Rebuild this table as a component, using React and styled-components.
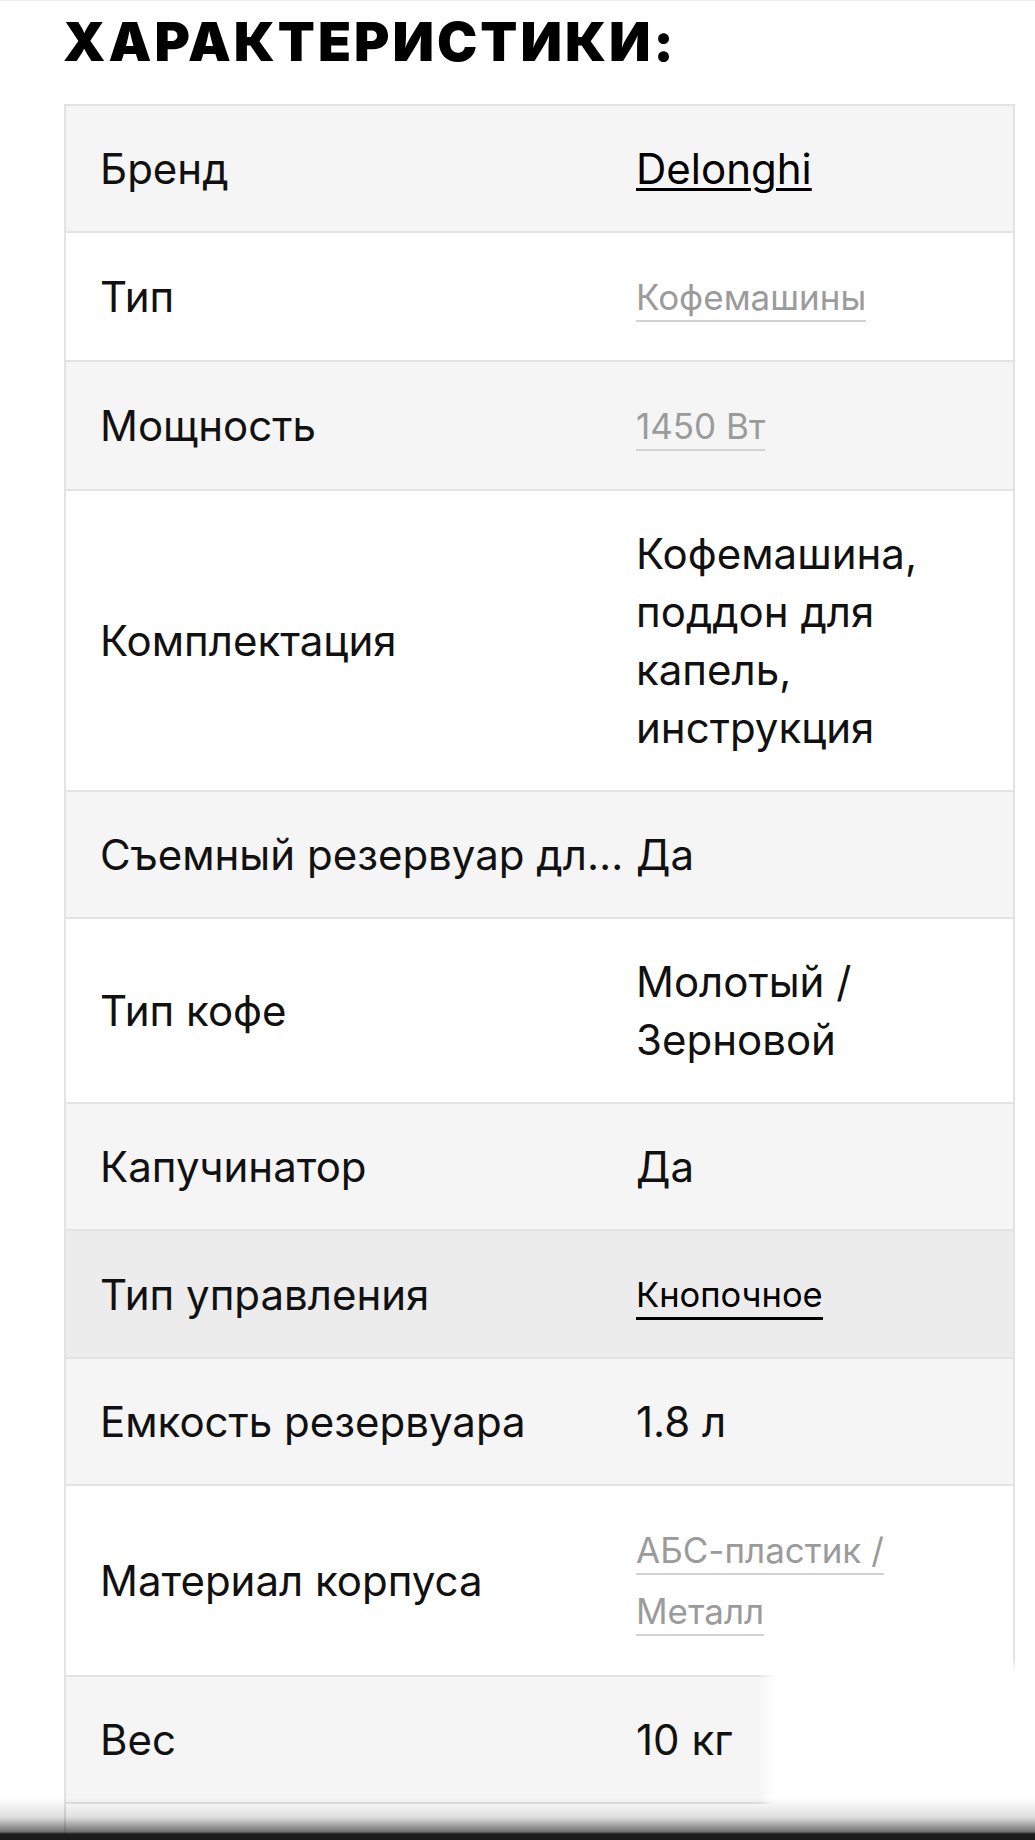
import styled, { createGlobalStyle } from "styled-components";

const GlobalStyle = createGlobalStyle`
    html, body {
        margin: 0;
        padding: 0;
        background: #ffffff;
    }

    body {
        font-family: Inter, "Noto Sans", "Liberation Sans", sans-serif;
        color: #111111;
    }
`;

const Page = styled.div`
    padding: 14px 20px 0 63px;
    box-sizing: border-box;
    border-top: 1px solid #efefef;
`;

const Title = styled.h2`
    margin: 0;
    font-size: 54px;
    line-height: 54px;
    font-weight: 900;
    letter-spacing: 3px;
    color: #000000;
    text-transform: uppercase;
`;

const Table = styled.div`
    margin-top: 35px;
    margin-left: 1px;
    width: 951px;
    border: 2px solid #e3e3e3;
    border-bottom: none;
    box-sizing: border-box;
`;

const Row = styled.div`
    display: grid;
    grid-template-columns: 570px 1fr;
    align-items: center;
    min-height: 58px;
    padding: 34px 0 33px;
    background: ${(p) => (p.$hover ? "#ececec" : p.$odd ? "#f5f5f5" : "#ffffff")};
    border-bottom: 2px solid #e3e3e3;
`;

const Label = styled.div`
    padding: 0 6px 0 34px;
    font-size: 42px;
    line-height: 58px;
    white-space: nowrap;
    overflow: hidden;
    text-overflow: ellipsis;
`;

const Value = styled.div`
    padding-right: 30px;
    font-size: ${(p) => p.$fs || 42}px;
    line-height: ${(p) => p.$lh || 58}px;
`;

const BrandLink = styled.a`
    color: #000000;
    text-decoration: underline;
    text-decoration-thickness: 3px;
    text-underline-offset: 4px;
`;

const MutedLink = styled.span`
    color: #9b9b9b;
    padding-bottom: 2px;
    border-bottom: 2px solid #d2d2d2;
`;

const DarkLink = styled.span`
    color: #000000;
    padding-bottom: 2px;
    border-bottom: 3px solid #000000;
`;

const BottomShade = styled.div`
    position: fixed;
    left: 0;
    right: 0;
    bottom: 0;
    height: 42px;
    background: linear-gradient(
        to bottom,
        rgba(0, 0, 0, 0) 0%,
        rgba(0, 0, 0, 0.12) 45%,
        rgba(0, 0, 0, 0.55) 80%,
        #1c1c1c 86%,
        #1c1c1c 100%
    );
`;

const Glow = styled.div`
    position: fixed;
    left: 766px;
    bottom: -40px;
    width: 320px;
    height: 214px;
    background: #ffffff;
    border-radius: 14px 0 0 0;
    filter: blur(6px);
`;

const specs = [
    { label: "Бренд", value: <BrandLink href="#">Delonghi</BrandLink> },
    { label: "Тип", value: <MutedLink>Кофемашины</MutedLink>, fs: 35, lh: 60 },
    { label: "Мощность", value: <MutedLink>1450 Вт</MutedLink>, fs: 35, lh: 60 },
    {
        label: "Комплектация",
        value: "Кофемашина, поддон для капель, инструкция",
    },
    { label: "Съемный резервуар для воды", value: "Да" },
    { label: "Тип кофе", value: "Молотый / Зерновой" },
    { label: "Капучинатор", value: "Да" },
    {
        label: "Тип управления",
        value: <DarkLink>Кнопочное</DarkLink>,
        fs: 34.5,
        lh: 59,
        hover: true,
    },
    { label: "Емкость резервуара", value: "1.8 л" },
    {
        label: "Материал корпуса",
        value: <MutedLink>АБС-пластик / Металл</MutedLink>,
        fs: 35,
        lh: 61,
    },
    { label: "Вес", value: "10 кг" },
    { label: "", value: "" },
];

function App() {
    return (
        <Page>
            <GlobalStyle />
            <Title>Характеристики:</Title>

            <Table>
                {specs.map((s, i) => (
                    <Row key={i} $odd={i % 2 === 0} $hover={s.hover}>
                        <Label>{s.label}</Label>
                        <Value $fs={s.fs} $lh={s.lh}>
                            {s.value}
                        </Value>
                    </Row>
                ))}
            </Table>

            <Glow />
            <BottomShade />
        </Page>
    );
}

export default App;
